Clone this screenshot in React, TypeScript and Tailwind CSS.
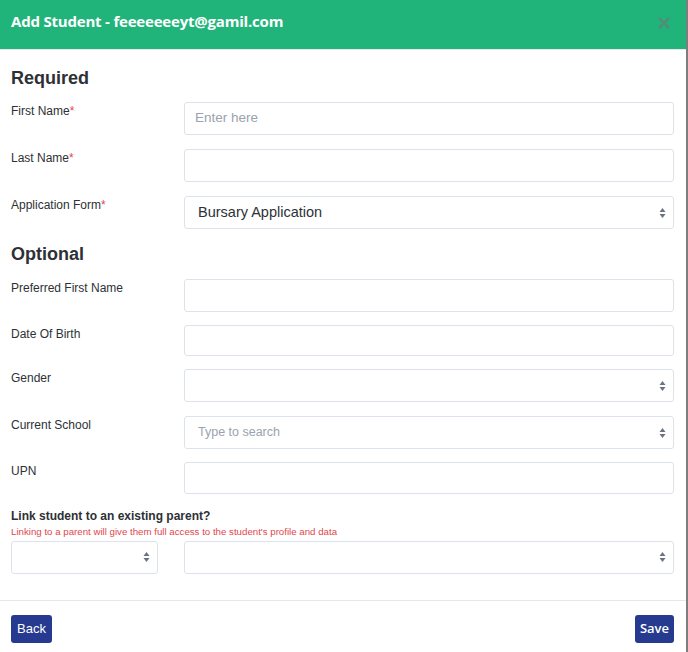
import React from "react";

const Arrows = () => (
  <svg width="7" height="11" viewBox="0 0 7 11" className="absolute right-[7px] top-1/2 -translate-y-1/2">
    <path d="M3.5 0.5 L6.5 4.5 H0.5 Z" fill="#6b7280" />
    <path d="M3.5 10.5 L6.5 6.5 H0.5 Z" fill="#6b7280" />
  </svg>
);

const Input = ({ placeholder, h = "h-[33px]" }: { placeholder?: string; h?: string }) => (
  <div className={`flex-1 ${h} border border-[#dde3ea] rounded-[3px] flex items-center px-[10px] text-[13.5px] text-[#9aa3ad]`}>
    {placeholder}
  </div>
);

const Select = ({ value, muted, w = "flex-1" }: { value?: string; muted?: boolean; w?: string }) => (
  <div className={`relative ${w} h-[33px] border border-[#dde3ea] rounded-[3px] flex items-center px-[13px] ${muted ? "text-[12.5px] text-[#9aa3ad]" : "text-[14.5px] text-[#2d3136]"}`}>
    {value}
    <Arrows />
  </div>
);

const Row = ({ label, req, children, mb = "mb-[14px]" }: { label: string; req?: boolean; children: React.ReactNode; mb?: string }) => (
  <div className={`flex ${mb}`}>
    <div className="w-[173px] text-[12px] text-[#2d3136]">
      {label}
      {req && <span className="text-[#e0474c]">*</span>}
    </div>
    {children}
  </div>
);

export default function App() {
  return (
    <div className="w-[688px] h-[652px] bg-[#7d7d7d] flex" style={{ fontFamily: "'Liberation Sans', Arial, sans-serif" }}>
      <div className="w-[686px] h-[652px] bg-white flex flex-col">
        <div className="h-[50px] bg-[#20b47a] flex items-start justify-between pl-[11px] pr-[15px] pt-[10px] border-b border-[#e5e9ee]">
          <div className="text-white font-bold text-[15px] tracking-[-0.2px]" style={{ fontFamily: "'Open Sans', sans-serif" }}>
            Add Student - feeeeeeeyt@gamil.com
          </div>
          <svg width="14" height="14" viewBox="0 0 14 14" className="mt-[6px]">
            <path d="M2 2 L12 12 M12 2 L2 12" stroke="#4f8f78" strokeWidth="2.6" />
          </svg>
        </div>
        <div className="pl-[11px] pr-[12px] pt-[15px] flex-1">
          <div className="text-[18px] font-bold text-[#2d3136] mb-[10px]">Required</div>
          <Row label="First Name" req><Input placeholder="Enter here" /></Row>
          <Row label="Last Name" req><Input /></Row>
          <Row label="Application Form" req mb="mb-[12px]"><Select value="Bursary Application" /></Row>
          <div className="text-[18px] font-bold text-[#2d3136] mb-[11px]">Optional</div>
          <Row label="Preferred First Name" mb="mb-[13px]"><Input /></Row>
          <Row label="Date Of Birth" mb="mb-[13px]"><Input h="h-[31px]" /></Row>
          <Row label="Gender" mb="mb-[14px]"><Select /></Row>
          <Row label="Current School" mb="mb-[13px]"><Select value="Type to search" muted /></Row>
          <Row label="UPN" mb="mb-[13px]"><Input h="h-[32px]" /></Row>
          <div className="text-[12px] font-bold text-[#2d3136]">Link student to an existing parent?</div>
          <div className="text-[9.7px] text-[#e0474c] mb-[1px]">Linking to a parent will give them full access to the student's profile and data</div>
          <div className="flex gap-[26px]">
            <Select w="w-[147px]" />
            <Select />
          </div>
        </div>
        <div className="border-t border-[#e2e8ee] h-[52px] flex items-start justify-between pl-[11px] pr-[12px] pt-[14px]">
          <button className="h-[28px] px-[6px] bg-[#263a8f] text-white text-[13px] rounded-[3px]">Back</button>
          <button className="h-[28px] px-[5px] bg-[#263a8f] text-white text-[13px] font-semibold rounded-[3px]" style={{ fontFamily: "'Open Sans', sans-serif" }}>Save</button>
        </div>
      </div>
    </div>
  );
}
